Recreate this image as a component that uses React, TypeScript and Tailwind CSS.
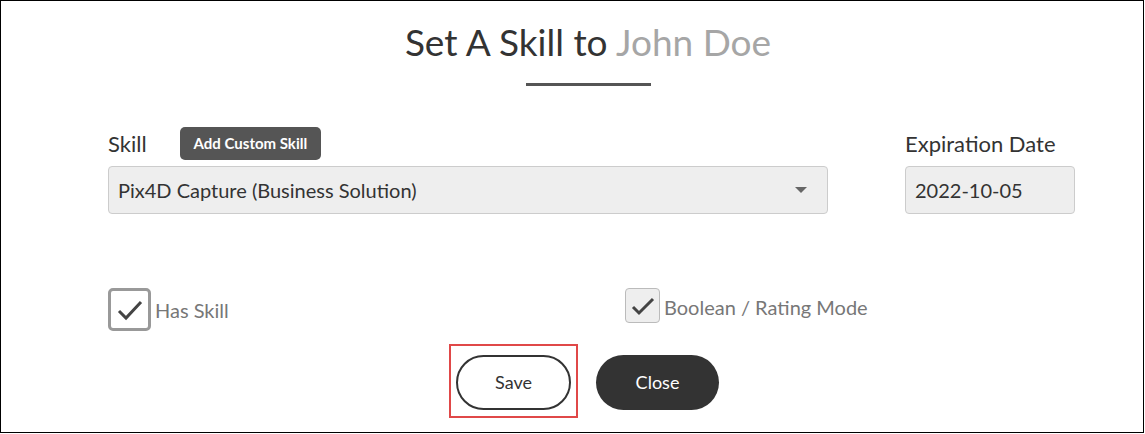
export default function App() {
  return (
    <div
      className="w-[1145px] h-[434px] bg-white"
      style={{ fontFamily: "Lato, 'Open Sans', sans-serif" }}
    >
      <div className="w-[1144px] h-[433px] border border-black flex flex-col">
        <div className="flex flex-col items-center pt-[19px] pl-[32px]">
          <h1 className="text-[37px] leading-[44px] text-[#333]">
            Set A Skill to <span className="text-[#a6a6a6]">John Doe</span>
          </h1>
          <div className="w-[125px] h-[3px] bg-[#555] mt-[19px]" />
        </div>

        <div className="flex pl-[107px] pt-[38px]">
          <div className="w-[720px]">
            <div className="flex items-center h-[38px] mb-[4px]">
              <span className="text-[22px] text-[#333] mr-[33px]">Skill</span>
              <button className="h-[33px] px-[14px] rounded-[5px] bg-[#555] text-white text-[15px] font-bold">
                Add Custom Skill
              </button>
            </div>
            <div className="h-[48px] bg-[#eee] border border-[#ccc] rounded-[4px] flex items-center justify-between pl-[9px] pr-[20px]">
              <span className="text-[20px] text-[#333]">
                Pix4D Capture (Business Solution)
              </span>
              <svg width="12" height="6" viewBox="0 0 12 6">
                <path d="M0 0h12L6 6z" fill="#666" />
              </svg>
            </div>
          </div>
          <div className="ml-[77px] w-[170px]">
            <div className="flex items-center h-[38px] mb-[4px]">
              <span className="text-[22px] text-[#333]">Expiration Date</span>
            </div>
            <div className="h-[48px] bg-[#eee] border border-[#ccc] rounded-[4px] flex items-center pl-[9px]">
              <span className="text-[20px] text-[#333]">2022-10-05</span>
            </div>
          </div>
        </div>

        <div className="flex pl-[107px] pt-[74px]">
          <label className="flex items-center w-[517px]">
            <span className="w-[43px] h-[43px] border-[3px] border-[#999] rounded-[5px] bg-white flex items-center justify-center">
              <svg width="26" height="22" viewBox="0 0 26 22">
                <path d="M2 12l7 7L24 3" stroke="#444" strokeWidth="3" fill="none" />
              </svg>
            </span>
            <span className="ml-[4px] text-[20px] text-[#777]">Has Skill</span>
          </label>
          <label className="flex items-start">
            <span className="w-[35px] h-[35px] border border-[#bbb] rounded-[4px] bg-[#eee] flex items-center justify-center">
              <svg width="24" height="20" viewBox="0 0 24 20">
                <path d="M2 11l6 6L22 3" stroke="#444" strokeWidth="3" fill="none" />
              </svg>
            </span>
            <span className="ml-[4px] text-[20px] leading-[38px] text-[#777]">
              Boolean / Rating Mode
            </span>
          </label>
        </div>

        <div className="flex justify-center gap-[18px] pt-[13px] pl-[24px]">
          <div className="border-2 border-[#e04848] px-[5px] pt-[9px] pb-[6px]">
            <button className="w-[115px] h-[55px] rounded-full border-2 border-[#333] bg-white text-[18px] text-[#333]">
              Save
            </button>
          </div>
          <div className="pt-[11px]">
            <button className="w-[123px] h-[55px] rounded-full bg-[#333] text-white text-[18px]">
              Close
            </button>
          </div>
        </div>
      </div>
    </div>
  );
}
